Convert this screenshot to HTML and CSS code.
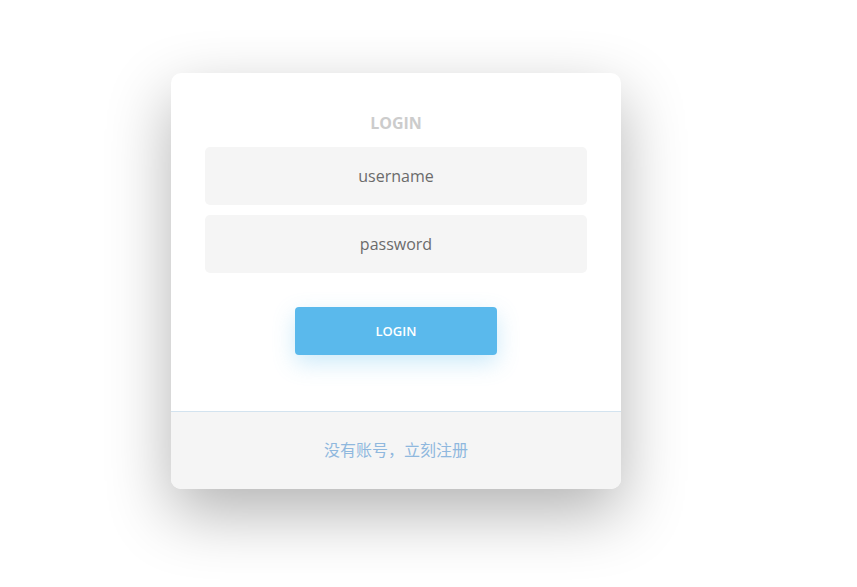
FILE: index.html
```html
<!DOCTYPE html>
<html>
<head>
<meta charset="utf-8">
<link rel="stylesheet" href="styles.css">
</head>
<body>
<div class="card">
  <div class="main">
    <h1 class="title">LOGIN</h1>
    <div class="field">username</div>
    <div class="field">password</div>
    <div class="actions"><button class="btn">LOGIN</button></div>
  </div>
  <div class="footer">没有账号，立刻注册</div>
</div>
</body>
</html>
```
FILE: styles.css
```css
html, body {
  margin: 0;
  padding: 0;
  background: #fff;
  font-family: "Open Sans", "Noto Sans", "Noto Sans CJK SC", sans-serif;
}
body {
  width: 857px;
  height: 587px;
  overflow: hidden;
}
.card {
  margin: 73px 0 0 171px;
  width: 450px;
  height: 416px;
  border-radius: 10px;
  background: #fff;
  box-shadow: 0 24px 64px rgba(0, 0, 0, 0.3);
  overflow: hidden;
  display: flex;
  flex-direction: column;
}
.main {
  flex-shrink: 0;
  padding: 40px 34px 0;
  height: 339px;
  box-sizing: border-box;
  border-bottom: 1px solid #d3e3ef;
  display: flex;
  flex-direction: column;
}
.title {
  margin: 0 0 14px;
  font-size: 16px;
  line-height: 20px;
  font-weight: 700;
  color: #cccccc;
  text-align: center;
}
.field {
  flex-shrink: 0;
  height: 58px;
  border-radius: 5px;
  background: #f5f5f5;
  color: #6b6b6b;
  font-size: 16px;
  display: flex;
  align-items: center;
  justify-content: center;
  margin-bottom: 10px;
}
.field + .field { margin-bottom: 0; }
.actions {
  display: flex;
  justify-content: center;
  margin-top: 34px;
}
.btn {
  width: 202px;
  height: 48px;
  border: none;
  border-radius: 4px;
  background: #5ab9ec;
  color: #fff;
  font-family: inherit;
  font-size: 13px;
  font-weight: 600;
  box-shadow: 0 8px 22px rgba(90, 185, 236, 0.3);
}
.footer {
  flex: 1;
  padding-bottom: 3px;
  background: #f5f5f5;
  color: #8fb8de;
  font-size: 16px;
  font-family: "Noto Sans CJK SC", sans-serif;
  display: flex;
  align-items: center;
  justify-content: center;
}
```
